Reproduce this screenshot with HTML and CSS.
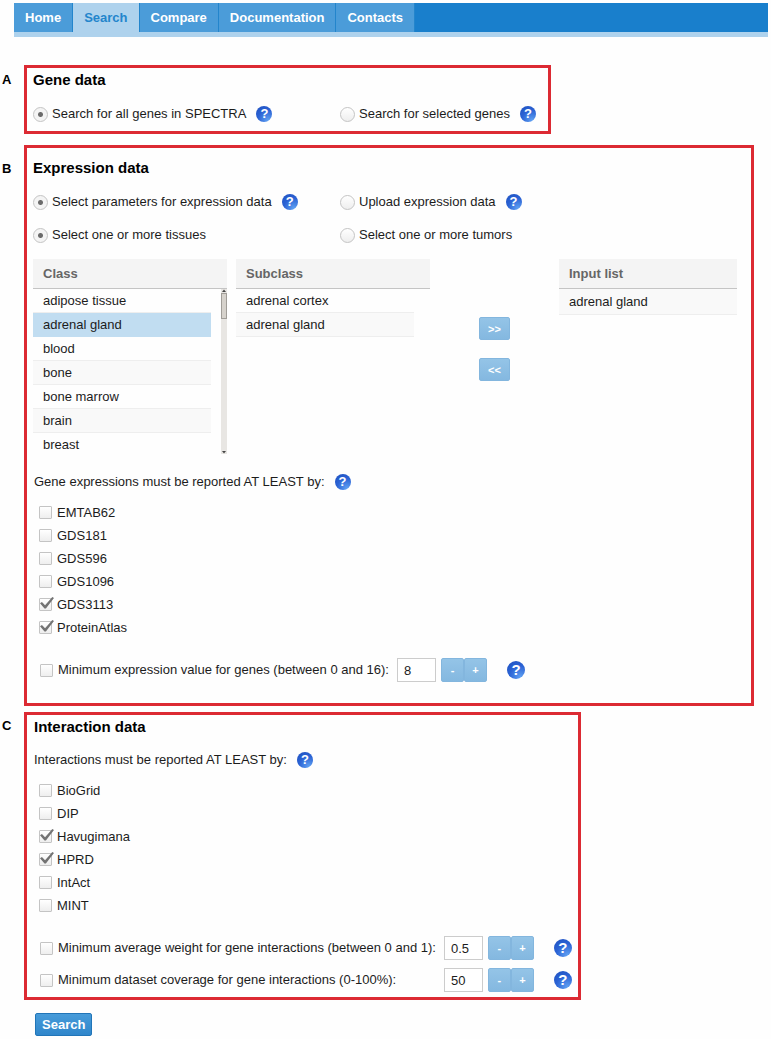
FILE: index.html
```html
<!DOCTYPE html>
<html lang="en">
  <head>
    <meta charset="UTF-8" />
    <meta name="viewport" content="width=device-width, initial-scale=1.0" />
    <title>SPECTRA - Search</title>
    <link rel="stylesheet" href="styles.css">
  </head>
  <body>
    <nav class="menu">
      <a href="#">Home</a>
      <a href="#" class="active">Search</a>
      <a href="#">Compare</a>
      <a href="#">Documentation</a>
      <a href="#">Contacts</a>
    </nav>

    <form class="search-form">
      <section class="panel gene">
        <span class="letter">A</span>
        <div class="box">
          <h2>Gene data</h2>
          <div class="radios">
            <div class="field">
              <label><input type="radio" name="genes" checked />Search for all genes in SPECTRA</label>
              <button type="button" class="help">?</button>
            </div>
            <div class="field">
              <label><input type="radio" name="genes" />Search for selected genes</label>
              <button type="button" class="help">?</button>
            </div>
          </div>
        </div>
      </section>

      <section class="panel expression">
        <span class="letter">B</span>
        <div class="box">
          <h2>Expression data</h2>
          <div class="radios">
            <div class="field">
              <label><input type="radio" name="source" checked />Select parameters for expression data</label>
              <button type="button" class="help">?</button>
            </div>
            <div class="field">
              <label><input type="radio" name="source" />Upload expression data</label>
              <button type="button" class="help">?</button>
            </div>
            <div class="field">
              <label><input type="radio" name="sample" checked />Select one or more tissues</label>
            </div>
            <div class="field">
              <label><input type="radio" name="sample" />Select one or more tumors</label>
            </div>
          </div>

          <div class="picker">
            <div class="list">
              <table>
                <colgroup>
                  <col class="name" />
                  <col />
                </colgroup>
                <thead>
                  <tr><th colspan="2">Class</th></tr>
                </thead>
                <tbody>
                  <tr><td>adipose tissue</td></tr>
                  <tr class="selected"><td>adrenal gland</td></tr>
                  <tr><td>blood</td></tr>
                  <tr><td>bone</td></tr>
                  <tr><td>bone marrow</td></tr>
                  <tr><td>brain</td></tr>
                  <tr><td>breast</td></tr>
                </tbody>
              </table>
              <div class="scrollbar">
                <svg viewBox="0 0 5 4"><path d="M0.5 3L2.5 0.5L4.5 3Z" /></svg>
                <span class="thumb"></span>
                <svg viewBox="0 0 5 4"><path d="M0.5 1L2.5 3.5L4.5 1Z" /></svg>
              </div>
            </div>
            <div class="list">
              <table>
                <colgroup>
                  <col class="name" />
                  <col />
                </colgroup>
                <thead>
                  <tr><th colspan="2">Subclass</th></tr>
                </thead>
                <tbody>
                  <tr><td>adrenal cortex</td></tr>
                  <tr><td>adrenal gland</td></tr>
                </tbody>
              </table>
            </div>
            <div class="move">
              <button type="button" class="light">&gt;&gt;</button>
              <button type="button" class="light">&lt;&lt;</button>
            </div>
            <div class="list input-list">
              <table>
                <thead>
                  <tr><th>Input list</th></tr>
                </thead>
                <tbody>
                  <tr><td>adrenal gland</td></tr>
                </tbody>
              </table>
            </div>
          </div>

          <div class="field report">
            <span>Gene expressions must be reported AT LEAST by:</span>
            <button type="button" class="help">?</button>
          </div>
          <div class="checks">
            <label><input type="checkbox" />EMTAB62</label>
            <label><input type="checkbox" />GDS181</label>
            <label><input type="checkbox" />GDS596</label>
            <label><input type="checkbox" />GDS1096</label>
            <label><input type="checkbox" checked />GDS3113</label>
            <label><input type="checkbox" checked />ProteinAtlas</label>
          </div>
          <div class="limits">
            <label><input type="checkbox" />Minimum expression value for genes (between 0 and 16):</label>
            <div class="stepper">
              <input type="text" value="8" aria-label="Minimum expression value" />
              <button type="button" class="light">-</button>
              <button type="button" class="light">+</button>
              <button type="button" class="help big">?</button>
            </div>
          </div>
        </div>
      </section>

      <section class="panel interaction">
        <span class="letter">C</span>
        <div class="box">
          <h2>Interaction data</h2>
          <div class="field report">
            <span>Interactions must be reported AT LEAST by:</span>
            <button type="button" class="help">?</button>
          </div>
          <div class="checks">
            <label><input type="checkbox" />BioGrid</label>
            <label><input type="checkbox" />DIP</label>
            <label><input type="checkbox" checked />Havugimana</label>
            <label><input type="checkbox" checked />HPRD</label>
            <label><input type="checkbox" />IntAct</label>
            <label><input type="checkbox" />MINT</label>
          </div>
          <div class="limits">
            <label><input type="checkbox" />Minimum average weight for gene interactions (between 0 and 1):</label>
            <div class="stepper">
              <input type="text" value="0.5" aria-label="Minimum average weight" />
              <button type="button" class="light">-</button>
              <button type="button" class="light">+</button>
              <button type="button" class="help big">?</button>
            </div>
            <label><input type="checkbox" />Minimum dataset coverage for gene interactions (0-100%):</label>
            <div class="stepper">
              <input type="text" value="50" aria-label="Minimum dataset coverage" />
              <button type="button" class="light">-</button>
              <button type="button" class="light">+</button>
              <button type="button" class="help big">?</button>
            </div>
          </div>
        </div>
      </section>

      <button type="submit" class="submit">Search</button>
    </form>
  </body>
</html>
```
FILE: styles.css
```css
* {
  box-sizing: border-box;
}

body {
  margin: 0;
  padding: 3px 3px 0 0;
  background-color: #fefefe;
  color: #1c1c1c;
  font-family: "Liberation Sans", Arial, sans-serif;
  font-size: 13px;
  line-height: 20px;
}

button,
input {
  margin: 0;
  font-family: inherit;
}

button {
  padding: 0;
  cursor: pointer;
}

/* top menu */
.menu {
  display: flex;
  margin-left: 14px;
  background-color: #197fcc;
  border-bottom: 5px solid #aed2ed;
}

.menu a {
  padding: 0 11px;
  border-right: 1px solid #2385cc;
  background-color: #4b9cd9;
  color: #fff;
  font-weight: bold;
  line-height: 29px;
  text-decoration: none;
}

.menu a.active {
  background-color: #aed2ed;
  color: #2385cc;
}

/* panels */
.search-form {
  padding: 28px 14px 0 0;
}

.panel {
  display: flex;
}

.letter {
  width: 24px;
  padding-left: 2px;
  color: #000;
  font-weight: bold;
}

.box {
  border: 3px solid #dc2a33;
}

h2 {
  margin: 0;
  color: #000;
  font-size: 15px;
  line-height: 20px;
}

.gene .letter {
  padding-top: 5px;
}

.gene .box {
  padding: 2px 12px 7px 6px;
}

.expression {
  margin: 11px 0 6px;
}

.expression .letter {
  padding-top: 14px;
}

.expression .box {
  flex: 1;
  padding: 10px 14px 21px 6px;
}

.interaction .letter {
  padding-top: 4px;
}

.interaction .box {
  padding: 2px 6px 5px 7px;
}

/* radios and checkboxes */
.radios {
  display: grid;
  grid-template-columns: 307px max-content;
  row-gap: 13px;
  margin-top: 14px;
}

.field {
  display: flex;
  align-items: center;
  gap: 10px;
}

label {
  display: flex;
  align-items: center;
  gap: 4px;
}

.checks label,
.limits label {
  gap: 5px;
}

input[type="radio"],
input[type="checkbox"] {
  appearance: none;
  flex: none;
  border: 1px solid #c4c4c4;
  background: linear-gradient(#fff, #eee);
}

input[type="radio"] {
  width: 15px;
  height: 15px;
  border-radius: 50%;
}

input[type="radio"]:checked {
  background: radial-gradient(circle, #6b6b6b 2px, #f4f4f4 3px);
}

input[type="checkbox"] {
  width: 13px;
  height: 13px;
  border-radius: 1px;
}

input[type="checkbox"]:checked {
  position: relative;
}

input[type="checkbox"]:checked::after {
  content: "";
  position: absolute;
  left: 0;
  top: -2px;
  width: 14px;
  height: 12px;
  background-color: #737373;
  clip-path: polygon(0 52%, 14% 42%, 36% 68%, 88% 0, 100% 8%, 42% 96%, 32% 96%);
}

.help {
  width: 16px;
  height: 16px;
  border: 0;
  border-radius: 50%;
  background: radial-gradient(circle at 75% 90%, #5fa0f2, #2a62d4 55%, #1f4fbd);
  color: #fff;
  font-size: 13px;
  font-weight: bold;
  line-height: 16px;
}

.help.big {
  width: 18px;
  height: 18px;
  margin-left: 20px;
  font-size: 15px;
  line-height: 18px;
}

/* class, subclass and input lists */
.picker {
  display: grid;
  grid-template-columns: 194px 194px 1fr 178px;
  column-gap: 9px;
  height: 195px;
  margin: 14px 0 18px;
}

.list {
  position: relative;
  overflow: hidden;
}

table {
  width: 100%;
  table-layout: fixed;
  border-collapse: separate;
  border-spacing: 0;
}

.name {
  width: 178px;
}

th {
  height: 30px;
  padding: 0 10px;
  border-bottom: 1px solid #c4c4c4;
  background-color: #f4f4f4;
  color: #666;
  text-align: left;
}

td {
  height: 24px;
  padding: 0 10px;
  border-bottom: 1px solid #eee;
}

tr:nth-child(even) td,
.input-list td {
  background-color: #f9f9f9;
}

.input-list td {
  height: 26px;
}

tr.selected td {
  background-color: #c1ddf1;
  border-color: #c1ddf1;
}

.scrollbar {
  position: absolute;
  top: 30px;
  right: 0;
  bottom: 0;
  width: 6px;
  display: flex;
  flex-direction: column;
  background-color: #e8e6e3;
}

.scrollbar svg {
  width: 6px;
  height: 4px;
  fill: #444;
}

.thumb {
  height: 26px;
  margin-bottom: auto;
  border: 1px solid #a09d98;
  background-color: #d6d2cc;
}

.move {
  display: flex;
  flex-direction: column;
  align-items: center;
  gap: 18px;
  padding-top: 58px;
}

/* buttons */
.light {
  height: 23px;
  border: 1px solid #83b6de;
  border-radius: 2px;
  background: linear-gradient(#94c4e7, #84b8e0);
  color: #fff;
  font-size: 11px;
  font-weight: bold;
}

.move .light {
  width: 31px;
}

.report {
  padding-left: 1px;
}

.checks {
  margin: 9px 0 19px 6px;
}

.checks label {
  height: 23px;
}

.limits {
  display: grid;
  grid-template-columns: max-content max-content;
  gap: 8px;
  margin-left: 7px;
}

.stepper {
  display: flex;
  align-items: center;
}

.stepper input {
  width: 39px;
  height: 24px;
  margin-right: 5px;
  padding: 0 6px;
  border: 1px solid #ccc;
  background-color: #fff;
  color: #1c1c1c;
  font-size: 13px;
}

.stepper .light {
  width: 23px;
  height: 24px;
}

.interaction .report {
  margin-top: 13px;
  padding-left: 0;
}

.interaction .checks {
  margin-left: 5px;
}

.interaction .limits {
  margin-left: 6px;
}

.submit {
  display: block;
  margin: 13px 0 0 35px;
  padding: 0 6px;
  height: 23px;
  border: 1px solid #2175b8;
  border-radius: 2px;
  background: linear-gradient(#479bd9, #2f86cb);
  color: #fff;
  font-size: 13px;
  font-weight: bold;
}
```
